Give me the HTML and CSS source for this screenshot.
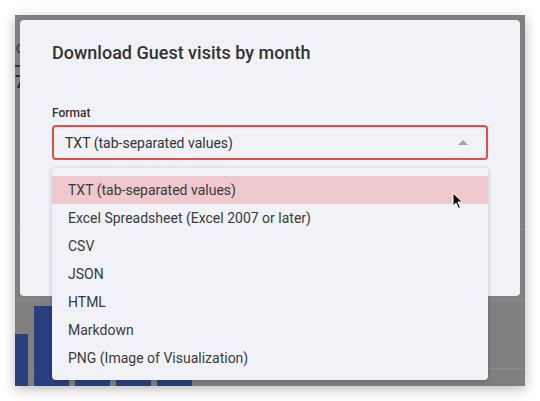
FILE: index.html
```html
<!DOCTYPE html>
<html lang="en">
<head>
  <meta charset="UTF-8" />
  <title>Download Guest visits by month</title>
  <link rel="stylesheet" href="styles.css">
</head>
<body>
  <div class="frame">
    <div class="backdrop">
      <div class="bg-title">Co</div>
      <div class="bg-rule"></div>
      <div class="bg-value">7</div>
      <div class="grid-line line-1"></div>
      <div class="grid-line line-2"></div>
      <div class="grid-line line-3"></div>
      <div class="bars">
        <div class="bar bar-cut" style="height: 52px"></div>
        <div class="bar" style="height: 80px"></div>
        <div class="bar" style="height: 90px"></div>
        <div class="bar" style="height: 95px"></div>
        <div class="bar" style="height: 85px"></div>
      </div>
    </div>

    <div class="modal">
      <h1>Download Guest visits by month</h1>
      <label class="field-label">Format</label>
      <div class="select">
        <span>TXT (tab-separated values)</span>
        <span class="caret"></span>
      </div>
    </div>

    <ul class="menu">
      <li class="active">TXT (tab-separated values)</li>
      <li>Excel Spreadsheet (Excel 2007 or later)</li>
      <li>CSV</li>
      <li>JSON</li>
      <li>HTML</li>
      <li>Markdown</li>
      <li>PNG (Image of Visualization)</li>
    </ul>

    <svg class="cursor" width="12" height="18" viewBox="0 0 12 18">
      <path d="M1 1 L1 14 L4 11 L6.5 16.5 L8.5 15.5 L6 10 L10.5 10 Z" fill="#111" stroke="#fff" stroke-width="1" stroke-linejoin="round"/>
    </svg>
  </div>
</body>
</html>
```

FILE: styles.css
```css
body {
  margin: 0;
  background-color: #ffffff;
  font-family: Roboto, "Liberation Sans", sans-serif;
  color: #333333;
}
.frame {
  position: relative;
  margin: 15px;
  width: 510px;
  height: 371px;
  background-color: #808080;
  box-shadow: 0 3px 12px rgba(0,0,0,0.28);
  overflow: hidden;
}
.backdrop {
  position: relative;
  height: 100%;
}
.bg-title {
  position: absolute;
  left: 1px;
  top: 26px;
  font-size: 13px;
  color: #2c2c2c;
}
.bg-rule {
  position: absolute;
  left: 0;
  top: 50px;
  width: 20px;
  height: 2px;
  background-color: #333333;
}
.bg-value {
  position: absolute;
  left: 0;
  top: 56px;
  font-size: 18px;
  font-weight: 700;
  color: #2c2c2c;
}
.grid-line {
  position: absolute;
  left: 0;
  right: 0;
  height: 1px;
  background-color: #8b8b8b;
}
.line-1 { top: 214px; }
.line-2 { top: 284px; }
.line-3 { top: 353px; }
.bars {
  position: absolute;
  left: 0;
  bottom: 0;
  display: flex;
  align-items: flex-end;
  gap: 6px;
}
.bar {
  width: 35px;
  background-color: #2b3f7f;
}
.bar-cut {
  width: 13px;
}
.modal {
  position: absolute;
  left: 5px;
  top: 5px;
  width: 500px;
  height: 276px;
  box-sizing: border-box;
  padding: 22px 32px;
  background-color: #f1f2f7;
  border-radius: 4px;
}
.modal h1 {
  margin: 0 0 42px 0;
  font-size: 18px;
  font-weight: 500;
  line-height: 22px;
  color: #333333;
}
.field-label {
  display: block;
  font-size: 12px;
  font-weight: 500;
  line-height: 14px;
  margin-bottom: 5px;
  color: #333333;
}
.select {
  display: flex;
  align-items: center;
  justify-content: space-between;
  height: 35px;
  box-sizing: border-box;
  padding: 0 18px 0 11px;
  border: 2px solid #e84a4a;
  border-radius: 4px;
  font-size: 14px;
  color: #333333;
}
.caret {
  width: 0;
  height: 0;
  border-left: 5px solid transparent;
  border-right: 5px solid transparent;
  border-bottom: 5px solid #a3a3a3;
}
.menu {
  position: absolute;
  left: 37px;
  top: 153px;
  width: 436px;
  margin: 0;
  padding: 8px 0;
  list-style: none;
  background-color: #f1f2f7;
  border-radius: 4px;
  box-shadow: 0 1px 5px rgba(0,0,0,0.22);
}
.menu li {
  height: 28px;
  line-height: 28px;
  padding-left: 16px;
  font-size: 14px;
  color: #3a3a3a;
}
.menu li.active {
  background-color: #efc8cd;
}
.cursor {
  position: absolute;
  left: 437px;
  top: 177px;
}
```
